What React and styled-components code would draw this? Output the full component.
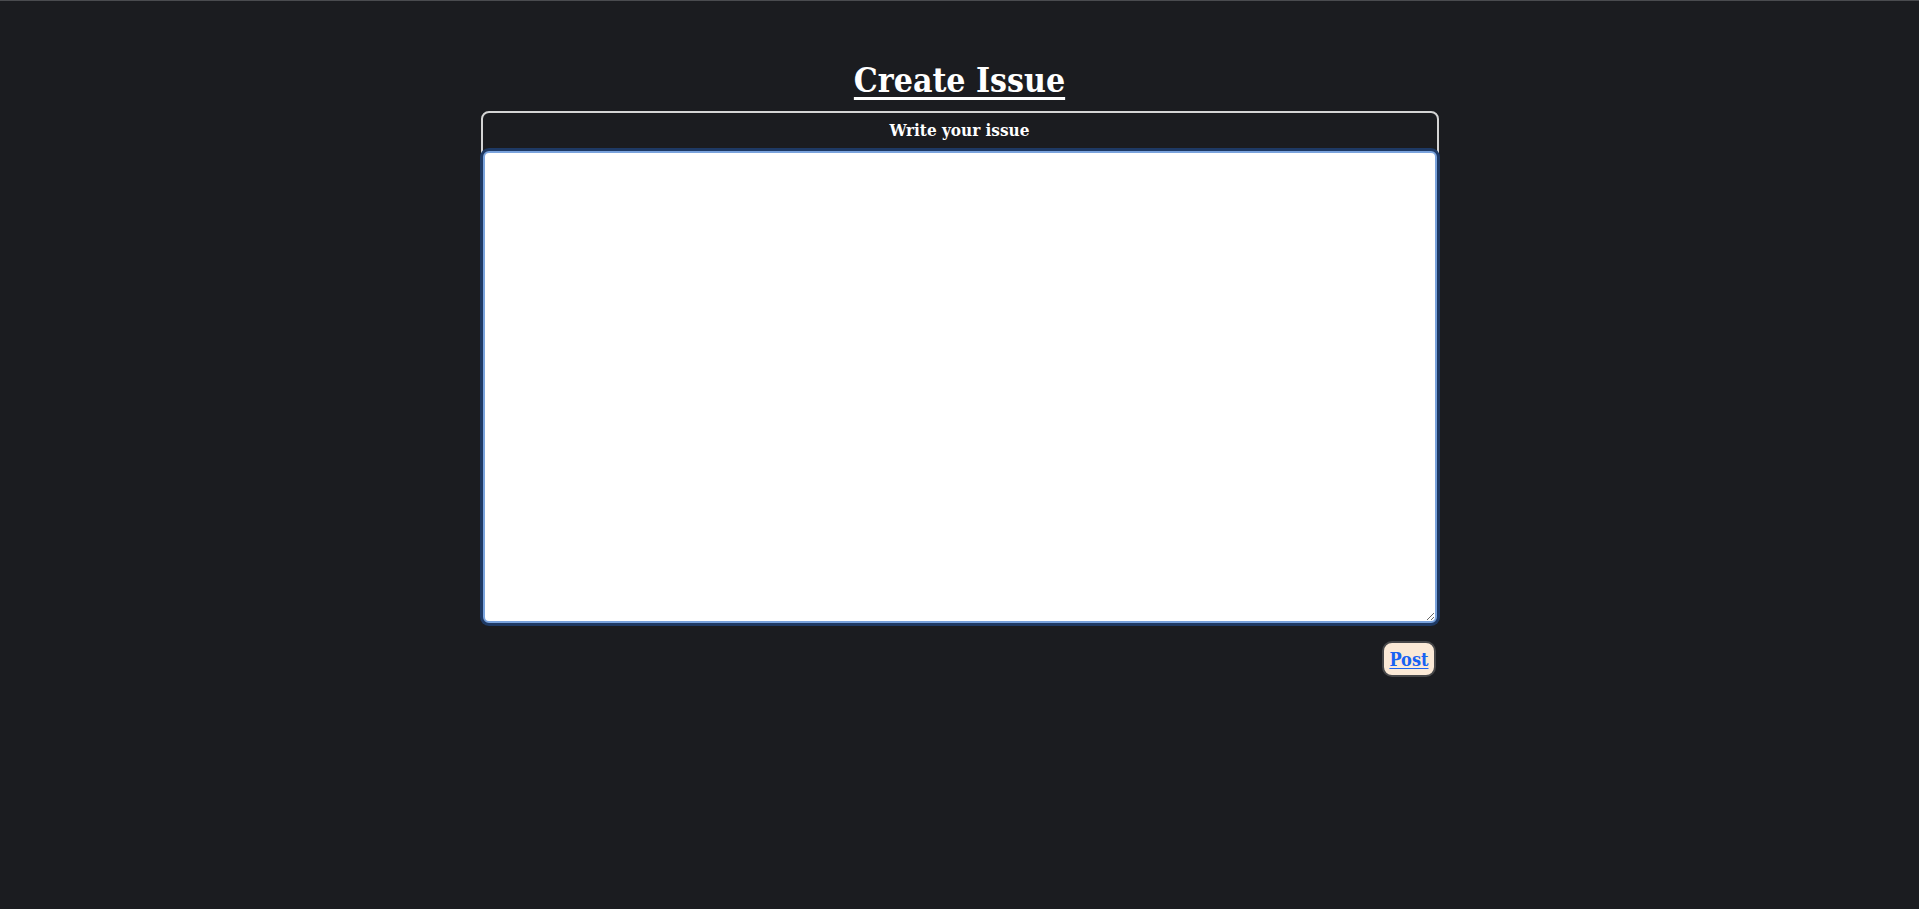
import React from "react";
import styled, { createGlobalStyle } from "styled-components";

const Global = createGlobalStyle`
  html, body { margin: 0; padding: 0; background: #1b1c20; }
  body {
    min-height: 909px;
    border-top: 1px solid #4a4b4f;
    box-sizing: border-box;
    font-family: "DejaVu Serif", "Liberation Serif", serif;
    color: #fff;
  }
`;

const Page = styled.main`
  display: flex;
  flex-direction: column;
  align-items: center;
  padding-top: 58px;
`;

const Title = styled.h1`
  margin: 0 0 8px;
  font-family: "DejaVu Serif Condensed", "DejaVu Serif", serif;
  font-size: 33.5px;
  font-weight: bold;
  line-height: 44px;
  text-decoration: underline;
  text-decoration-thickness: 3px;
  text-underline-offset: 5px;
`;

const Form = styled.form`
  width: 958px;
  display: flex;
  flex-direction: column;
`;

const Card = styled.div`
  border: 2px solid #d4d4d4;
  border-radius: 8px;
  display: flex;
  flex-direction: column;
  background: #1b1c20;
`;

const Label = styled.label`
  text-align: center;
  font-family: "DejaVu Serif Condensed", "DejaVu Serif", serif;
  font-weight: bold;
  font-size: 17px;
  line-height: 34px;
  height: 38px;
`;

const TextArea = styled.textarea`
  display: block;
  box-sizing: border-box;
  width: 100%;
  height: 472px;
  margin: 0;
  resize: vertical;
  border: 2px solid #7aa3dd;
  border-radius: 6px;
  box-shadow: 0 0 0 3px #1e3964;
  outline: none;
  background: #fff;
  padding: 8px 12px;
  font-family: "DejaVu Serif", serif;
  font-size: 16px;
  color: #111;
`;

const Actions = styled.div`
  display: flex;
  justify-content: flex-end;
  padding: 16px 3px 0;
`;

const PostButton = styled.button`
  background: #fbe9d6;
  border: 2px solid #48484a;
  border-radius: 10px;
  padding: 0 5px;
  height: 36px;
  font-family: "DejaVu Serif Condensed", "DejaVu Serif", serif;
  font-weight: bold;
  font-size: 18px;
  color: #1a62f2;
  text-decoration: underline;
  text-underline-offset: 2px;
  cursor: pointer;
`;

export default function App() {
  return (
    <>
      <Global />
      <Page>
        <Title>Create Issue</Title>
        <Form onSubmit={(e) => e.preventDefault()}>
          <Card>
            <Label htmlFor="issue">Write your issue</Label>
            <TextArea id="issue" autoFocus />
          </Card>
          <Actions>
            <PostButton type="submit">Post</PostButton>
          </Actions>
        </Form>
      </Page>
    </>
  );
}
